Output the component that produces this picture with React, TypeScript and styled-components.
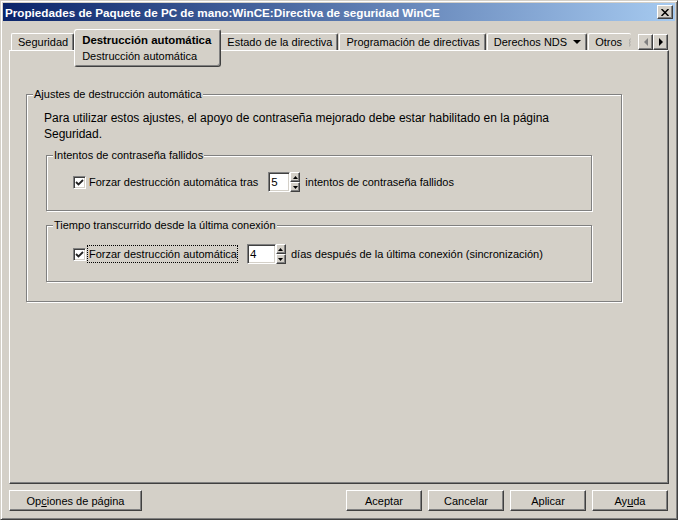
import React from 'react'
import styled, { createGlobalStyle } from 'styled-components'

const GlobalStyle = createGlobalStyle`
  html, body {
    margin: 0;
    padding: 0;
    background: #d4d0c8;
  }
  body {
    font-family: "Liberation Sans", Arial, sans-serif;
    font-size: 11px;
    color: #000;
  }
  * {
    box-sizing: border-box;
  }
`

const Window = styled.div`
  width: 678px;
  height: 520px;
  display: flex;
  flex-direction: column;
  background: #d4d0c8;
  border: 1px solid;
  border-color: #d4d0c8 #404040 #404040 #d4d0c8;
  box-shadow: inset 1px 1px 0 #fff, inset -1px -1px 0 #808080;
  padding: 2px;
`

const TitleBar = styled.div`
  height: 18px;
  display: flex;
  align-items: center;
  justify-content: space-between;
  padding: 0 2px 0 2px;
  background: linear-gradient(to right, #0a246a, #a6caf0);
`

const Title = styled.span`
  color: #fff;
  font-weight: bold;
  font-size: 11.7px;
  white-space: nowrap;
`

const CaptionButton = styled.div`
  width: 16px;
  height: 14px;
  display: flex;
  align-items: center;
  justify-content: center;
  background: #d4d0c8;
  border: 1px solid;
  border-color: #fff #404040 #404040 #fff;
  box-shadow: inset -1px -1px 0 #808080;
`

const Body = styled.div`
  flex: 1;
  display: flex;
  flex-direction: column;
  padding: 8px 6px 6px 6px;
`

const TabRow = styled.div`
  height: 21px;
  display: flex;
  align-items: flex-start;
  padding-left: 2px;
`

const Tab = styled.div`
  margin-top: 4px;
  height: 17px;
  display: flex;
  align-items: center;
  gap: 6px;
  padding: 0 5px 0 6px;
  margin-right: 1px;
  white-space: nowrap;
  border-top: 1px solid #fff;
  border-left: 1px solid #fff;
  border-right: 1px solid #404040;
  border-radius: 2px 2px 0 0;
  box-shadow: inset -1px 0 0 #808080;
`

const ClippedTab = styled(Tab)`
  border-right: none;
  box-shadow: none;
  padding-right: 0;
  width: 43px;
  overflow: hidden;
  gap: 7px;
`

const ActiveTab = styled.div`
  position: relative;
  z-index: 2;
  height: 38px;
  display: flex;
  flex-direction: column;
  padding: 3px 9px 0 7px;
  margin: 0 -1px 0 -1px;
  background: #d4d0c8;
  border: 1px solid;
  border-color: #fff #404040 #404040 #fff;
  border-radius: 3px;
  box-shadow: inset -1px -1px 0 #808080;
  white-space: nowrap;
  line-height: 14px;
`

const ActiveTitle = styled.span`
  font-weight: bold;
  font-size: 11.4px;
`

const SubPage = styled.span`
  margin-top: 2px;
`

const ScrollPair = styled.div`
  margin-left: auto;
  margin-top: 5px;
  margin-right: 1px;
  display: flex;
`

const ScrollButton = styled.div`
  width: 15px;
  height: 16px;
  display: flex;
  align-items: center;
  justify-content: center;
  background: #d4d0c8;
  border: 1px solid;
  border-color: #fff #404040 #404040 #fff;
  box-shadow: inset -1px -1px 0 #808080;
`

const Panel = styled.div`
  flex: 1;
  border: 1px solid;
  border-color: #fff #404040 #404040 #fff;
  box-shadow: inset -1px -1px 0 #808080;
  padding: 37px 0 0 16px;
`

const Group = styled.fieldset<{ $width: number }>`
  width: ${({ $width }) => $width}px;
  margin: 0;
  padding: 0;
  border: 1px solid #808080;
  box-shadow: 1px 1px 0 #fff, inset 1px 1px 0 #fff;
  min-width: 0;
`

const OuterGroup = styled(Group)`
  padding-bottom: 19px;
`

const InnerGroup = styled(Group)<{ $top: number; $bottom: number }>`
  margin: ${({ $top }) => $top}px 0 0 19px;
  padding-bottom: ${({ $bottom }) => $bottom}px;
`

const Legend = styled.legend`
  margin-left: 6px;
  padding: 0 1px;
  line-height: 13px;
  background: #d4d0c8;
`

const Note = styled.p`
  margin: 9px 0 0 17px;
  font-size: 12px;
  line-height: 16px;
`

const Row = styled.div<{ $top: number }>`
  margin-top: ${({ $top }) => $top}px;
  height: 20px;
  display: flex;
  align-items: center;
  padding-left: 26px;
`

const CheckBox = styled.div`
  width: 13px;
  height: 13px;
  display: flex;
  align-items: center;
  justify-content: center;
  background: #fff;
  border: 1px solid;
  border-color: #808080 #fff #fff #808080;
  box-shadow: inset 1px 1px 0 #404040, inset -1px -1px 0 #d4d0c8;
`

const Label = styled.span<{ $focus?: boolean }>`
  margin-left: ${({ $focus }) => ($focus ? 2 : 3)}px;
  padding: ${({ $focus }) => ($focus ? '2px 0 2px 1px' : '0')};
  outline: ${({ $focus }) => ($focus ? '1px dotted #000' : 'none')};
  white-space: nowrap;
`

const SpinField = styled.div`
  margin-left: 10px;
  display: flex;
  height: 20px;
`

const SpinInput = styled.div<{ $width: number }>`
  width: ${({ $width }) => $width}px;
  height: 20px;
  display: flex;
  align-items: center;
  padding-left: 2px;
  background: #fff;
  border: 1px solid;
  border-color: #808080 #fff #fff #808080;
  box-shadow: inset 1px 1px 0 #404040, inset -1px -1px 0 #d4d0c8;
  font-size: 11.5px;
`

const SpinButtons = styled.div`
  width: 10px;
  display: flex;
  flex-direction: column;
`

const SpinButton = styled.div`
  height: 10px;
  display: flex;
  align-items: center;
  justify-content: center;
  background: #d4d0c8;
  border: 1px solid;
  border-color: #fff #404040 #404040 #fff;
  box-shadow: inset -1px -1px 0 #808080;
`

const After = styled.span`
  margin-left: 5px;
  white-space: nowrap;
`

const ButtonRow = styled.div`
  margin-top: 6px;
  display: flex;
  justify-content: space-between;
`

const ButtonGroup = styled.div`
  display: flex;
  gap: 6px;
  margin-right: 1px;
`

const Button = styled.div<{ $width?: number }>`
  width: ${({ $width }) => $width ?? 76}px;
  height: 21px;
  display: flex;
  align-items: center;
  justify-content: center;
  background: #d4d0c8;
  border: 1px solid;
  border-color: #fff #404040 #404040 #fff;
  box-shadow: inset -1px -1px 0 #808080;
  white-space: nowrap;
`

const Check = () => (
  <svg width="9" height="9" viewBox="0 0 9 9">
    <path d="M1 4 L3.5 6.5 L8 2" fill="none" stroke="#222" strokeWidth="1.8" />
  </svg>
)

const Arrow = ({ dir, color = '#000' }: { dir: 'up' | 'down' | 'left' | 'right'; color?: string }) => {
  const paths = {
    up: 'M0 3 L2.5 0 L5 3 Z',
    down: 'M0 0 L5 0 L2.5 3 Z',
    left: 'M4 0 L4 8 L0 4 Z',
    right: 'M0 0 L4 4 L0 8 Z',
  }
  const size = dir === 'up' || dir === 'down' ? [5, 3] : [4, 8]
  return (
    <svg width={size[0]} height={size[1]} viewBox={`0 0 ${size[0]} ${size[1]}`}>
      <path d={paths[dir]} fill={color} />
    </svg>
  )
}

const Spinner = ({ value, width }: { value: string; width: number }) => (
  <SpinField>
    <SpinInput $width={width}>{value}</SpinInput>
    <SpinButtons>
      <SpinButton>
        <Arrow dir="up" />
      </SpinButton>
      <SpinButton>
        <Arrow dir="down" />
      </SpinButton>
    </SpinButtons>
  </SpinField>
)

export default function App() {
  return (
    <>
      <GlobalStyle />
      <Window>
        <TitleBar>
          <Title>Propiedades de Paquete de PC de mano:WinCE:Directiva de seguridad WinCE</Title>
          <CaptionButton>
            <svg width="8" height="7" viewBox="0 0 8 7">
              <path d="M0.5 0 L7.5 7 M7.5 0 L0.5 7" stroke="#000" strokeWidth="1.5" />
            </svg>
          </CaptionButton>
        </TitleBar>
        <Body>
          <TabRow>
            <Tab>Seguridad</Tab>
            <ActiveTab>
              <ActiveTitle>Destrucción automática</ActiveTitle>
              <SubPage>Destrucción automática</SubPage>
            </ActiveTab>
            <Tab>Estado de la directiva</Tab>
            <Tab>Programación de directivas</Tab>
            <Tab>
              Derechos NDS
              <svg width="8" height="4" viewBox="0 0 8 4">
                <path d="M0 0 L8 0 L4 4 Z" fill="#000" />
              </svg>
            </Tab>
            <ClippedTab>
              Otros
              <svg width="4" height="15" viewBox="0 0 4 15">
                <path d="M3 0 L1 3 L2 6 L1 9 L2 12 L1 15" fill="none" stroke="#808080" strokeWidth="1" />
              </svg>
            </ClippedTab>
            <ScrollPair>
              <ScrollButton>
                <Arrow dir="left" color="#808080" />
              </ScrollButton>
              <ScrollButton>
                <Arrow dir="right" />
              </ScrollButton>
            </ScrollPair>
          </TabRow>
          <Panel>
            <OuterGroup $width={596}>
              <Legend>Ajustes de destrucción automática</Legend>
              <Note>
                Para utilizar estos ajustes, el apoyo de contraseña mejorado debe estar habilitado en la página
                <br />
                Seguridad.
              </Note>
              <InnerGroup $width={546} $top={7} $bottom={18}>
                <Legend>Intentos de contraseña fallidos</Legend>
                <Row $top={10}>
                  <CheckBox>
                    <Check />
                  </CheckBox>
                  <Label>Forzar destrucción automática tras</Label>
                  <Spinner value="5" width={22} />
                  <After>intentos de contraseña fallidos</After>
                </Row>
              </InnerGroup>
              <InnerGroup $width={546} $top={8} $bottom={17}>
                <Legend>Tiempo transcurrido desde la última conexión</Legend>
                <Row $top={12}>
                  <CheckBox>
                    <Check />
                  </CheckBox>
                  <Label $focus>Forzar destrucción automática</Label>
                  <Spinner value="4" width={29} />
                  <After>días después de la última conexión (sincronización)</After>
                </Row>
              </InnerGroup>
            </OuterGroup>
          </Panel>
          <ButtonRow>
            <Button $width={133}>
              <span>
                Op<u>c</u>iones de página
              </span>
            </Button>
            <ButtonGroup>
              <Button>Aceptar</Button>
              <Button>Cancelar</Button>
              <Button>Aplicar</Button>
              <Button>
                <span>
                  Ay<u>u</u>da
                </span>
              </Button>
            </ButtonGroup>
          </ButtonRow>
        </Body>
      </Window>
    </>
  )
}
